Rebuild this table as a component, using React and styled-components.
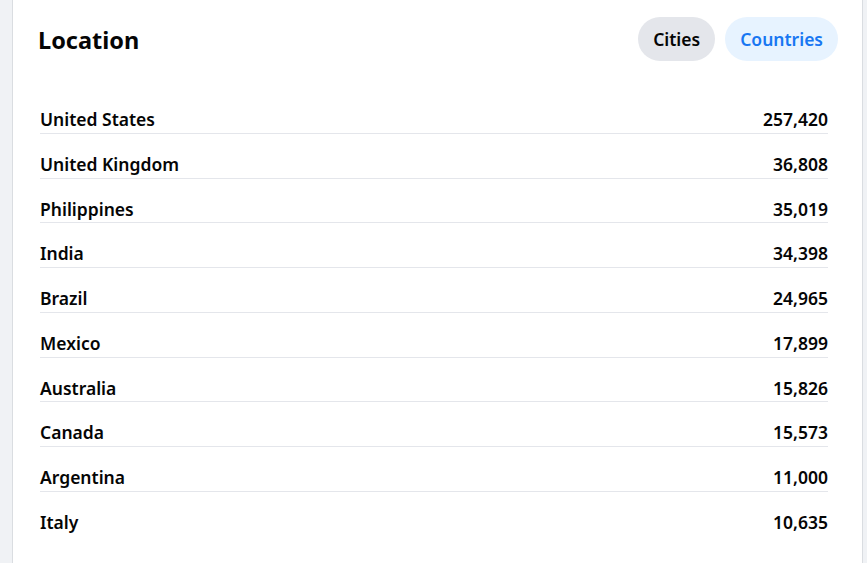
import React, { useState } from 'react'
import styled, { createGlobalStyle } from 'styled-components'

const GlobalStyle = createGlobalStyle`
  html, body {
    margin: 0;
    padding: 0;
    background: #f0f2f5;
  }

  body {
    font-family: 'Noto Sans', 'Open Sans', sans-serif;
    color: #050505;
  }
`

const Card = styled.section`
  box-sizing: border-box;
  min-height: 563px;
  margin: 0 4px 0 12px;
  padding: 17px 24px 0 25px;
  background: #fff;
  border-left: 1px solid #dadde1;
  border-right: 1px solid #dadde1;
`

const Header = styled.header`
  display: flex;
  align-items: center;
  justify-content: space-between;
  height: 46px;
`

const Title = styled.h2`
  margin: 0;
  font-size: 23.5px;
  font-weight: 700;
`

const Tabs = styled.div`
  display: flex;
  gap: 10px;
  align-self: flex-start;
`

const Tab = styled.button`
  height: 44px;
  padding: 0 15px;
  border: 0;
  border-radius: 22px;
  font-family: inherit;
  font-size: 17.5px;
  font-weight: 600;
  cursor: pointer;
  background: ${({ active }) => (active ? '#e7f3ff' : '#e4e6eb')};
  color: ${({ active }) => (active ? '#1877f2' : '#050505')};
`

const List = styled.ul`
  list-style: none;
  margin: 26px 10px 0 2px;
  padding: 0;
`

const Row = styled.li`
  display: flex;
  justify-content: space-between;
  padding: 20px 0 2px;
  line-height: 21.75px;
  font-size: 17.5px;
  font-weight: 600;
  border-bottom: 1px solid #e4e6eb;

  &:last-child {
    border-bottom: 0;
  }
`

const countries = [
  ['United States', '257,420'],
  ['United Kingdom', '36,808'],
  ['Philippines', '35,019'],
  ['India', '34,398'],
  ['Brazil', '24,965'],
  ['Mexico', '17,899'],
  ['Australia', '15,826'],
  ['Canada', '15,573'],
  ['Argentina', '11,000'],
  ['Italy', '10,635'],
]

export default function App() {
  const [tab, setTab] = useState('countries')

  return (
    <>
      <GlobalStyle />
      <Card>
        <Header>
          <Title>Location</Title>
          <Tabs>
            <Tab active={tab === 'cities'} onClick={() => setTab('cities')}>
              Cities
            </Tab>
            <Tab active={tab === 'countries'} onClick={() => setTab('countries')}>
              Countries
            </Tab>
          </Tabs>
        </Header>
        <List>
          {countries.map(([name, count]) => (
            <Row key={name}>
              <span>{name}</span>
              <span>{count}</span>
            </Row>
          ))}
        </List>
      </Card>
    </>
  )
}
